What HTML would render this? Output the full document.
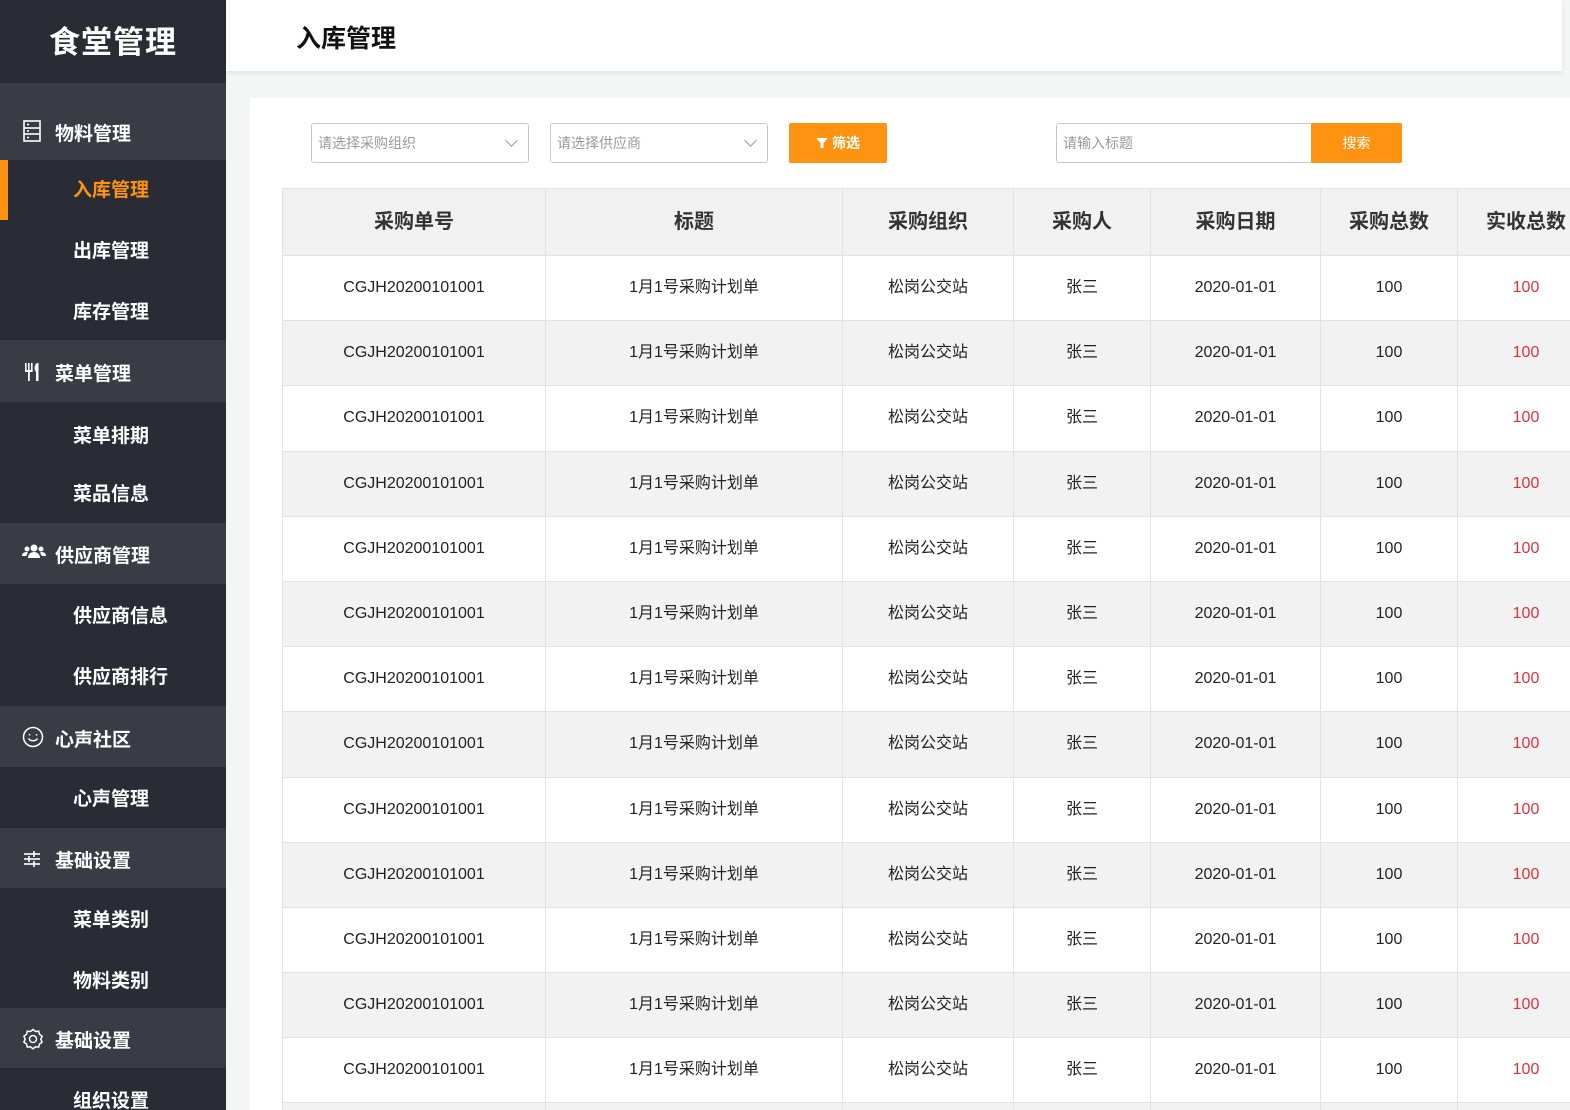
<!DOCTYPE html>
<html><head><meta charset="utf-8"><style>
*{margin:0;padding:0;box-sizing:border-box}
html,body{width:1570px;height:1110px;overflow:hidden}
body{background:#f4f5f5;font-family:"Liberation Sans","Noto Sans CJK SC",sans-serif;position:relative}
.sb{position:absolute;left:0;top:0;width:226px;height:1110px;background:#292c35;overflow:hidden}
.logo{position:absolute;left:0;top:0;width:226px;height:83px;color:#fff;font-size:31px;font-weight:bold;text-align:center;line-height:86px;letter-spacing:1px}
.g{position:absolute;left:0;width:226px;background:#393c45;color:#fff;font-size:19px;font-weight:bold}
.g span{position:absolute;left:55px}
.g svg{position:absolute;left:22px}
.s{position:absolute;left:73px;color:#fff;font-size:19px;font-weight:bold}
.hd{position:absolute;left:226px;top:0;width:1336px;height:71px;background:#fff;box-shadow:0 2px 4px rgba(0,0,0,.08)}
.hd span{position:absolute;left:70px;top:19px;font-size:25px;font-weight:bold;color:#111}
.card{position:absolute;left:250px;top:98px;width:1320px;height:1012px;background:#fff}
.sel{position:absolute;top:123px;height:40px;border:1px solid #c8c8c8;border-radius:3px;background:#fff;color:#999;font-size:14px;line-height:38px;padding-left:6px}
.sel i{position:absolute;right:12px;top:12px;width:9px;height:9px;border-right:1px solid #999;border-bottom:1px solid #999;transform:rotate(45deg)}
.btn{position:absolute;background:#fd9310;color:#fff;font-size:14px;font-weight:bold;text-align:center;line-height:40px;border-radius:2px}
.tw{position:absolute;left:282px;top:188px;width:1288px;height:922px;overflow:hidden}
table{width:1312px;border-collapse:collapse;table-layout:fixed}
td,th{border:1px solid #e2e2e2;text-align:center;font-size:16px;color:#222;height:65.2px;white-space:nowrap;overflow:hidden;vertical-align:middle;line-height:20px}
th{background:#f1f1f1;font-size:20px;height:67px;font-weight:bold;color:#333}
tr:nth-child(odd) td{background:#f2f2f2}
td.r{color:#e0303a}
</style></head><body>
<div class="sb">
<div class="logo">食堂管理</div>
<div class="g" style="top:83px;height:77px"><svg style="top:37px" width="20" height="22" viewBox="0 0 20 22" fill="none" stroke="#fff" stroke-width="1.6"><rect x="2" y="1" width="16" height="20"/><line x1="2" y1="8" x2="18" y2="8"/><line x1="2" y1="14" x2="18" y2="14"/><line x1="5" y1="4.5" x2="7" y2="4.5"/><line x1="5" y1="11" x2="7" y2="11"/><line x1="5" y1="17.5" x2="7" y2="17.5"/></svg><span style="top:36px">物料管理</span></div>
<div style="position:absolute;left:0;top:160px;width:8px;height:60px;background:#fd9310"></div>
<div class="s" style="top:175px;color:#fd9310">入库管理</div>
<div class="s" style="top:236px">出库管理</div>
<div class="s" style="top:297px">库存管理</div>
<div class="g" style="top:340px;height:62px"><svg style="top:22px" width="20" height="20" viewBox="0 0 20 20" fill="#fff"><rect x="3" y="1" width="1.6" height="8"/><rect x="6" y="1" width="1.6" height="8"/><rect x="9" y="1" width="1.6" height="8"/><rect x="3" y="8" width="7.6" height="2"/><rect x="6" y="9" width="1.8" height="10"/><path d="M15 1 C12 3 12 8 14 10 L14 19 L16.5 19 L16.5 1 Z"/></svg><span style="top:19px">菜单管理</span></div>
<div class="s" style="top:421px">菜单排期</div>
<div class="s" style="top:479px">菜品信息</div>
<div class="g" style="top:523px;height:61px"><svg style="top:20px" width="24" height="18" viewBox="0 0 24 18" fill="#fff"><circle cx="12" cy="5" r="3.5"/><circle cx="5" cy="6" r="2.5"/><circle cx="19" cy="6" r="2.5"/><path d="M6 15c0-4 3-6 6-6s6 2 6 6z"/><path d="M0 13c0-3 2-4 5-4l1 1c-1 1-1.5 2-1.5 3z"/><path d="M24 13c0-3-2-4-5-4l-1 1c1 1 1.5 2 1.5 3z"/></svg><span style="top:18px">供应商管理</span></div>
<div class="s" style="top:601px">供应商信息</div>
<div class="s" style="top:662px">供应商排行</div>
<div class="g" style="top:706px;height:61px"><svg style="top:20px" width="22" height="22" viewBox="0 0 22 22" fill="none" stroke="#fff" stroke-width="1.5"><circle cx="11" cy="11" r="9.5"/><path d="M6.5 12.5c2 3 7 3 9 0"/><line x1="7.5" y1="8" x2="7.5" y2="9.5"/><line x1="14.5" y1="8" x2="14.5" y2="9.5"/></svg><span style="top:19px">心声社区</span></div>
<div class="s" style="top:784px">心声管理</div>
<div class="g" style="top:828px;height:60px"><svg style="top:23px" width="20" height="16" viewBox="0 0 20 16" stroke="#fff" stroke-width="1.6"><line x1="2" y1="3" x2="18" y2="3"/><line x1="2" y1="8" x2="18" y2="8"/><line x1="2" y1="13" x2="18" y2="13"/><line x1="12" y1="0" x2="12" y2="6"/><line x1="7" y1="5" x2="7" y2="11"/><line x1="12" y1="10" x2="12" y2="16"/></svg><span style="top:18px">基础设置</span></div>
<div class="s" style="top:905px">菜单类别</div>
<div class="s" style="top:966px">物料类别</div>
<div class="g" style="top:1008px;height:60px"><svg style="top:20px" width="22" height="22" viewBox="0 0 22 22" fill="none" stroke="#fff" stroke-width="1.5"><path d="M11 1.5l2.5 2 3.2-.3.8 3.1 2.6 1.9-1.3 3 1.3 2.9-2.6 1.9-.8 3.1-3.2-.3-2.5 2-2.5-2-3.2.3-.8-3.1-2.6-1.9 1.3-3-1.3-2.9 2.6-1.9.8-3.1 3.2.3z"/><circle cx="11" cy="11" r="3.5"/></svg><span style="top:18px">基础设置</span></div>
<div class="s" style="top:1086px">组织设置</div>
</div>
<div class="hd"><span>入库管理</span></div>
<div class="card"></div>
<div class="sel" style="left:311px;width:218px">请选择采购组织<i></i></div>
<div class="sel" style="left:550px;width:218px">请选择供应商<i></i></div>
<div class="btn" style="left:789px;top:123px;width:98px"><svg width="12" height="12" viewBox="0 0 12 12" fill="#fff" style="vertical-align:-1px;margin-right:4px"><path d="M0 1h12L7.5 6v5h-3V6z"/></svg>筛选</div>
<div class="sel" style="left:1056px;width:256px;border-radius:3px 0 0 3px">请输入标题</div>
<div class="btn" style="left:1311px;top:123px;width:91px;font-weight:normal">搜索</div>
<div class="tw">
<table>
<colgroup><col style="width:263px"><col style="width:297px"><col style="width:171px"><col style="width:137px"><col style="width:170px"><col style="width:137px"><col style="width:137px"></colgroup>
<tr><th>采购单号</th><th>标题</th><th>采购组织</th><th>采购人</th><th>采购日期</th><th>采购总数</th><th>实收总数</th></tr>
<tr><td>CGJH20200101001</td><td>1月1号采购计划单</td><td>松岗公交站</td><td>张三</td><td>2020-01-01</td><td>100</td><td class="r">100</td></tr>
<tr><td>CGJH20200101001</td><td>1月1号采购计划单</td><td>松岗公交站</td><td>张三</td><td>2020-01-01</td><td>100</td><td class="r">100</td></tr>
<tr><td>CGJH20200101001</td><td>1月1号采购计划单</td><td>松岗公交站</td><td>张三</td><td>2020-01-01</td><td>100</td><td class="r">100</td></tr>
<tr><td>CGJH20200101001</td><td>1月1号采购计划单</td><td>松岗公交站</td><td>张三</td><td>2020-01-01</td><td>100</td><td class="r">100</td></tr>
<tr><td>CGJH20200101001</td><td>1月1号采购计划单</td><td>松岗公交站</td><td>张三</td><td>2020-01-01</td><td>100</td><td class="r">100</td></tr>
<tr><td>CGJH20200101001</td><td>1月1号采购计划单</td><td>松岗公交站</td><td>张三</td><td>2020-01-01</td><td>100</td><td class="r">100</td></tr>
<tr><td>CGJH20200101001</td><td>1月1号采购计划单</td><td>松岗公交站</td><td>张三</td><td>2020-01-01</td><td>100</td><td class="r">100</td></tr>
<tr><td>CGJH20200101001</td><td>1月1号采购计划单</td><td>松岗公交站</td><td>张三</td><td>2020-01-01</td><td>100</td><td class="r">100</td></tr>
<tr><td>CGJH20200101001</td><td>1月1号采购计划单</td><td>松岗公交站</td><td>张三</td><td>2020-01-01</td><td>100</td><td class="r">100</td></tr>
<tr><td>CGJH20200101001</td><td>1月1号采购计划单</td><td>松岗公交站</td><td>张三</td><td>2020-01-01</td><td>100</td><td class="r">100</td></tr>
<tr><td>CGJH20200101001</td><td>1月1号采购计划单</td><td>松岗公交站</td><td>张三</td><td>2020-01-01</td><td>100</td><td class="r">100</td></tr>
<tr><td>CGJH20200101001</td><td>1月1号采购计划单</td><td>松岗公交站</td><td>张三</td><td>2020-01-01</td><td>100</td><td class="r">100</td></tr>
<tr><td>CGJH20200101001</td><td>1月1号采购计划单</td><td>松岗公交站</td><td>张三</td><td>2020-01-01</td><td>100</td><td class="r">100</td></tr>
<tr><td>CGJH20200101001</td><td>1月1号采购计划单</td><td>松岗公交站</td><td>张三</td><td>2020-01-01</td><td>100</td><td class="r">100</td></tr>
</table>
</div>
</body></html>
